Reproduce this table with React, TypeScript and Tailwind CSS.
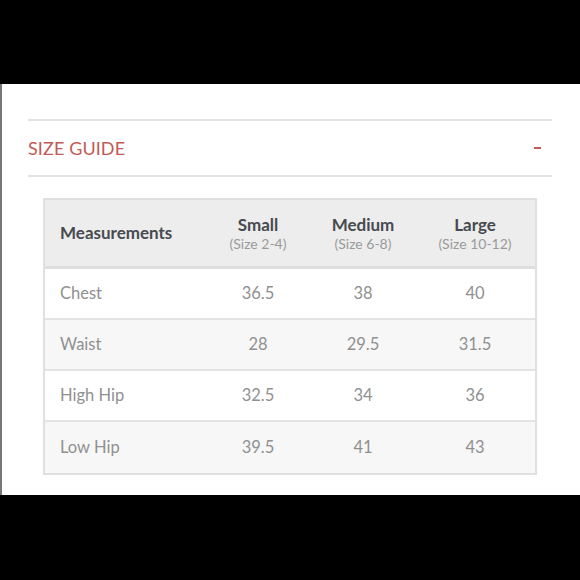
import React from 'react';

interface Row {
  label: string;
  small: string;
  medium: string;
  large: string;
}

const rows: Row[] = [
  { label: 'Chest', small: '36.5', medium: '38', large: '40' },
  { label: 'Waist', small: '28', medium: '29.5', large: '31.5' },
  { label: 'High Hip', small: '32.5', medium: '34', large: '36' },
  { label: 'Low Hip', small: '39.5', medium: '41', large: '43' },
];

const sizes = [
  { name: 'Small', range: '(Size 2-4)' },
  { name: 'Medium', range: '(Size 6-8)' },
  { name: 'Large', range: '(Size 10-12)' },
];

export default function App() {
  return (
    <div
      className="w-[580px] h-[580px] bg-black flex flex-col"
      style={{ fontFamily: 'Lato, "Open Sans", sans-serif' }}
    >
      <div className="h-[84px]" />
      <div className="h-[411px] bg-white border-l-2 border-[#777] pt-[35px] pl-[26px] pr-[28px]">
        {/* Accordion header */}
        <div className="border-y-2 border-[#e2e2e2] h-[58px] flex items-center justify-between">
          <span className="text-[18px] text-[#c25b55] tracking-[0.1px]">SIZE GUIDE</span>
          <span className="w-[7px] h-[2px] bg-[#c25b55] mr-[11px]" />
        </div>

        {/* Table */}
        <div className="mt-[21px] mx-[15px] border-2 border-[#e0e0e0]">
          <div className="grid grid-cols-[160px_106px_104px_120px] h-[69px] bg-[#ededed] border-b-[3px] border-[#dedede] items-center">
            <div className="pl-[15px] text-[17px] font-bold text-[#474a4f]">Measurements</div>
            {sizes.map((s) => (
              <div key={s.name} className="flex flex-col items-center">
                <span className="block text-[17px] leading-[20px] font-bold text-[#474a4f]">{s.name}</span>
                <span className="block text-[14px] leading-[17px] text-[#9a9a9a]">{s.range}</span>
              </div>
            ))}
          </div>
          {rows.map((r, i) => (
            <div
              key={r.label}
              className={`grid grid-cols-[160px_106px_104px_120px] items-center text-[16.5px] text-[#909090] ${
                i < rows.length - 1 ? 'h-[51px] border-b-2 border-[#e3e3e3]' : 'h-[51px]'
              } ${i % 2 === 1 ? 'bg-[#f7f7f7]' : 'bg-white'}`}
            >
              <div className="pl-[15px]">{r.label}</div>
              <div className="text-center">{r.small}</div>
              <div className="text-center">{r.medium}</div>
              <div className="text-center">{r.large}</div>
            </div>
          ))}
        </div>
      </div>
    </div>
  );
}
